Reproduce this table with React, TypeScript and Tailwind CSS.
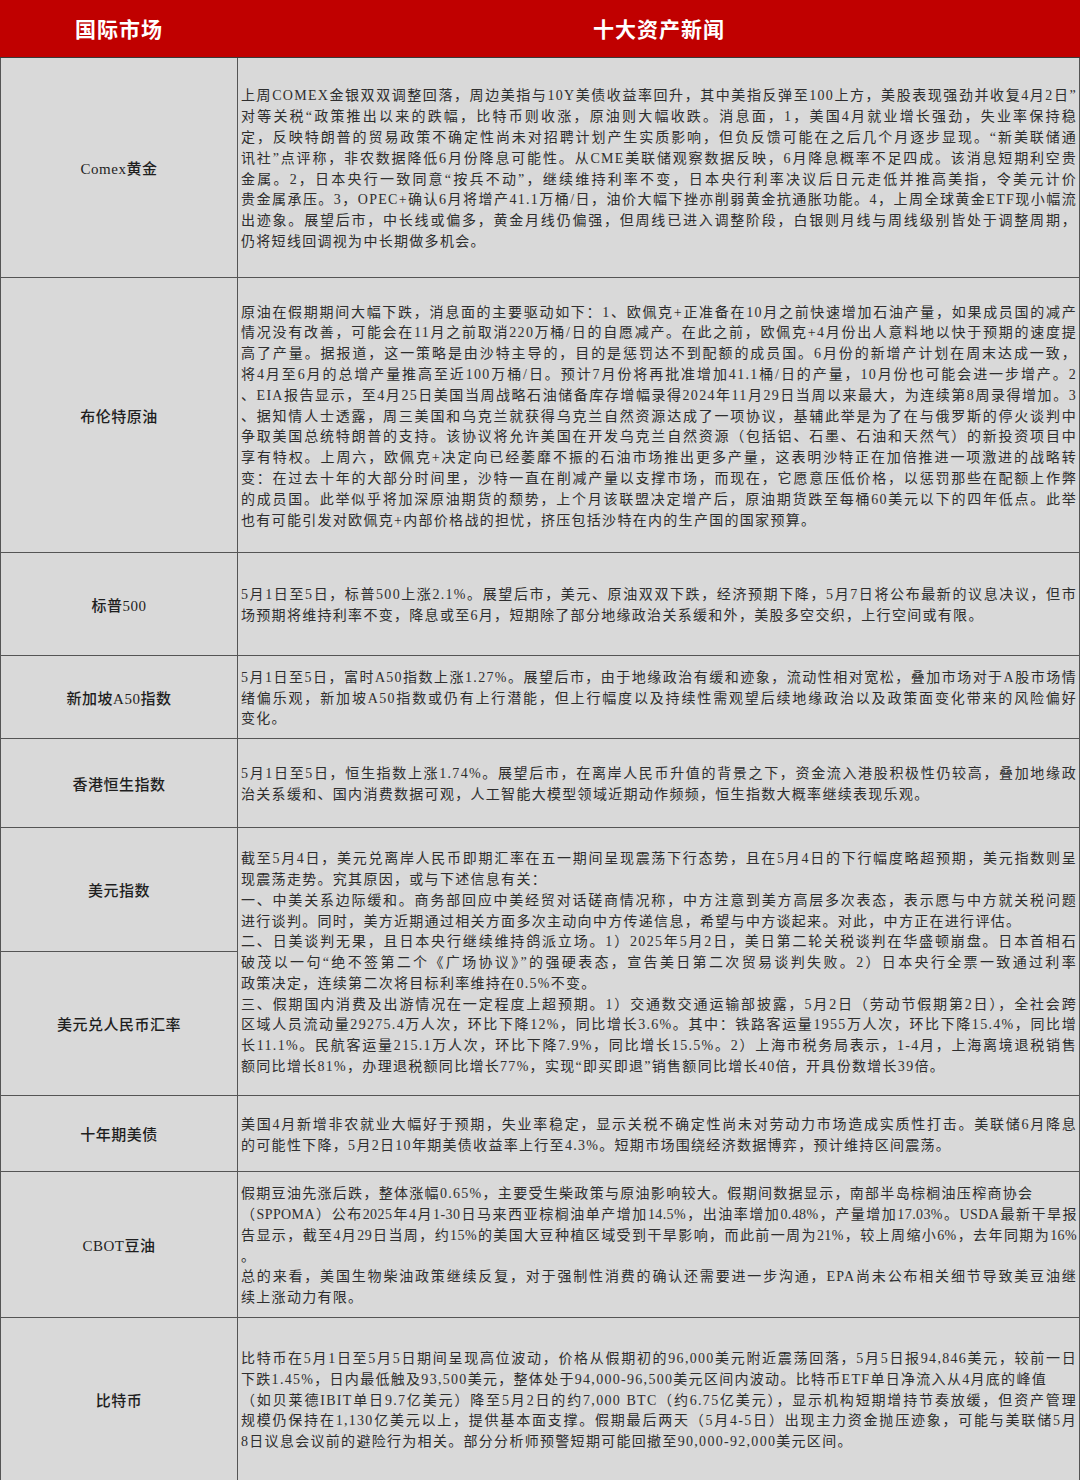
import React from "react";

interface Row {
  label: string;
  h: string;
  lines: string[];
  open?: number[];
  tight?: number[];
}

const rows1: Row[] = [
  {
    label: "Comex黄金",
    h: "h-[220px]",
    lines: [
      "上周COMEX金银双双调整回落，周边美指与10Y美债收益率回升，其中美指反弹至100上方，美股表现强劲并收复4月2日”",
      "对等关税“政策推出以来的跌幅，比特币则收涨，原油则大幅收跌。消息面，1，美国4月就业增长强劲，失业率保持稳",
      "定，反映特朗普的贸易政策不确定性尚未对招聘计划产生实质影响，但负反馈可能在之后几个月逐步显现。“新美联储通",
      "讯社”点评称，非农数据降低6月份降息可能性。从CME美联储观察数据反映，6月降息概率不足四成。该消息短期利空贵",
      "金属。2，日本央行一致同意“按兵不动”，继续维持利率不变，日本央行利率决议后日元走低并推高美指，令美元计价",
      "贵金属承压。3，OPEC+确认6月将增产41.1万桶/日，油价大幅下挫亦削弱黄金抗通胀功能。4，上周全球黄金ETF现小幅流",
      "出迹象。展望后市，中长线或偏多，黄金月线仍偏强，但周线已进入调整阶段，白银则月线与周线级别皆处于调整周期，",
      "仍将短线回调视为中长期做多机会。",
    ],
  },
  {
    label: "布伦特原油",
    h: "h-[275px]",
    lines: [
      "原油在假期期间大幅下跌，消息面的主要驱动如下：1、欧佩克+正准备在10月之前快速增加石油产量，如果成员国的减产",
      "情况没有改善，可能会在11月之前取消220万桶/日的自愿减产。在此之前，欧佩克+4月份出人意料地以快于预期的速度提",
      "高了产量。据报道，这一策略是由沙特主导的，目的是惩罚达不到配额的成员国。6月份的新增产计划在周末达成一致，",
      "将4月至6月的总增产量推高至近100万桶/日。预计7月份将再批准增加41.1桶/日的产量，10月份也可能会进一步增产。2",
      "、EIA报告显示，至4月25日美国当周战略石油储备库存增幅录得2024年11月29日当周以来最大，为连续第8周录得增加。3",
      "、据知情人士透露，周三美国和乌克兰就获得乌克兰自然资源达成了一项协议，基辅此举是为了在与俄罗斯的停火谈判中",
      "争取美国总统特朗普的支持。该协议将允许美国在开发乌克兰自然资源（包括铝、石墨、石油和天然气）的新投资项目中",
      "享有特权。上周六，欧佩克+决定向已经萎靡不振的石油市场推出更多产量，这表明沙特正在加倍推进一项激进的战略转",
      "变：在过去十年的大部分时间里，沙特一直在削减产量以支撑市场，而现在，它愿意压低价格，以惩罚那些在配额上作弊",
      "的成员国。此举似乎将加深原油期货的颓势，上个月该联盟决定增产后，原油期货跌至每桶60美元以下的四年低点。此举",
      "也有可能引发对欧佩克+内部价格战的担忧，挤压包括沙特在内的生产国的国家预算。",
    ],
  },
  {
    label: "标普500",
    h: "h-[103px]",
    lines: [
      "5月1日至5日，标普500上涨2.1%。展望后市，美元、原油双双下跌，经济预期下降，5月7日将公布最新的议息决议，但市",
      "场预期将维持利率不变，降息或至6月，短期除了部分地缘政治关系缓和外，美股多空交织，上行空间或有限。",
    ],
  },
  {
    label: "新加坡A50指数",
    h: "h-[83px]",
    lines: [
      "5月1日至5日，富时A50指数上涨1.27%。展望后市，由于地缘政治有缓和迹象，流动性相对宽松，叠加市场对于A股市场情",
      "绪偏乐观，新加坡A50指数或仍有上行潜能，但上行幅度以及持续性需观望后续地缘政治以及政策面变化带来的风险偏好",
      "变化。",
    ],
  },
  {
    label: "香港恒生指数",
    h: "h-[89px]",
    lines: [
      "5月1日至5日，恒生指数上涨1.74%。展望后市，在离岸人民币升值的背景之下，资金流入港股积极性仍较高，叠加地缘政",
      "治关系缓和、国内消费数据可观，人工智能大模型领域近期动作频频，恒生指数大概率继续表现乐观。",
    ],
  },
];

const usdLines = [
  "截至5月4日，美元兑离岸人民币即期汇率在五一期间呈现震荡下行态势，且在5月4日的下行幅度略超预期，美元指数则呈",
  "现震荡走势。究其原因，或与下述信息有关：",
  "一、中美关系边际缓和。商务部回应中美经贸对话磋商情况称，中方注意到美方高层多次表态，表示愿与中方就关税问题",
  "进行谈判。同时，美方近期通过相关方面多次主动向中方传递信息，希望与中方谈起来。对此，中方正在进行评估。",
  "二、日美谈判无果，且日本央行继续维持鸽派立场。1）2025年5月2日，美日第二轮关税谈判在华盛顿崩盘。日本首相石",
  "破茂以一句“绝不签第二个《广场协议》”的强硬表态，宣告美日第二次贸易谈判失败。2）日本央行全票一致通过利率",
  "政策决定，连续第二次将目标利率维持在0.5%不变。",
  "三、假期国内消费及出游情况在一定程度上超预期。1）交通数交通运输部披露，5月2日（劳动节假期第2日），全社会跨",
  "区域人员流动量29275.4万人次，环比下降12%，同比增长3.6%。其中：铁路客运量1955万人次，环比下降15.4%，同比增",
  "长11.1%。民航客运量215.1万人次，环比下降7.9%，同比增长15.5%。2）上海市税务局表示，1-4月，上海离境退税销售",
  "额同比增长81%，办理退税额同比增长77%，实现“即买即退”销售额同比增长40倍，开具份数增长39倍。",
];

const rows2: Row[] = [
  {
    label: "十年期美债",
    h: "h-[76px]",
    lines: [
      "美国4月新增非农就业大幅好于预期，失业率稳定，显示关税不确定性尚未对劳动力市场造成实质性打击。美联储6月降息",
      "的可能性下降，5月2日10年期美债收益率上行至4.3%。短期市场围绕经济数据博弈，预计维持区间震荡。",
    ],
  },
  {
    label: "CBOT豆油",
    h: "h-[146px]",
    lines: [
      "假期豆油先涨后跌，整体涨幅0.65%，主要受生柴政策与原油影响较大。假期间数据显示，南部半岛棕榈油压榨商协会",
      "（SPPOMA）公布2025年4月1-30日马来西亚棕榈油单产增加14.5%，出油率增加0.48%，产量增加17.03%。USDA最新干旱报",
      "告显示，截至4月29日当周，约15%的美国大豆种植区域受到干旱影响，而此前一周为21%，较上周缩小6%，去年同期为16%",
      "。",
      "总的来看，美国生物柴油政策继续反复，对于强制性消费的确认还需要进一步沟通，EPA尚未公布相关细节导致美豆油继",
      "续上涨动力有限。",
    ],
    open: [0, 3],
    tight: [1, 2],
  },
  {
    label: "比特币",
    h: "h-[162px]",
    lines: [
      "比特币在5月1日至5月5日期间呈现高位波动，价格从假期初的96,000美元附近震荡回落，5月5日报94,846美元，较前一日",
      "下跌1.45%，日内最低触及93,500美元，整体处于94,000-96,500美元区间内波动。比特币ETF单日净流入从4月底的峰值",
      "（如贝莱德IBIT单日9.7亿美元）降至5月2日的约7,000 BTC（约6.75亿美元），显示机构短期增持节奏放缓，但资产管理",
      "规模仍保持在1,130亿美元以上，提供基本面支撑。假期最后两天（5月4-5日）出现主力资金抛压迹象，可能与美联储5月",
      "8日议息会议前的避险行为相关。部分分析师预警短期可能回撤至90,000-92,000美元区间。",
    ],
    open: [1],
  },
];

function Lines({
  lines,
  open = [],
  tight = [],
}: {
  lines: string[];
  open?: number[];
  tight?: number[];
}) {
  return (
    <div className="flex-1 min-w-0 flex flex-col justify-center pt-1 pl-[3px] pr-[2px] overflow-hidden">
      {lines.map((line, i) => {
        const last = i === lines.length - 1 || open.includes(i);
        return (
          <div
            key={i}
            className={`whitespace-nowrap leading-[20.8px] ${
              last ? "text-left" : "text-justify [text-align-last:justify]"
            } ${tight.includes(i) ? "tracking-[0.4px]" : ""}`}
          >
            {line}
          </div>
        );
      })}
    </div>
  );
}

function Label({ text }: { text: string }) {
  return (
    <div className="w-[237px] shrink-0 border-r border-[#555] flex items-center justify-center pt-1 text-[15px] font-medium tracking-[0.5px] text-[#1f1f1f]">
      {text}
    </div>
  );
}

function TableRow({ row, last }: { row: Row; last?: boolean }) {
  return (
    <div className={`flex ${row.h} ${last ? "" : "border-b border-[#555]"}`}>
      <Label text={row.label} />
      <Lines lines={row.lines} open={row.open} tight={row.tight} />
    </div>
  );
}

export default function App() {
  return (
    <div
      className="w-[1080px] h-[1480px] overflow-hidden bg-[#d9d9d9] text-[14px] tracking-[1.3px] text-[#2e2e2e]"
      style={{ fontFamily: "'Liberation Serif', 'Noto Sans CJK SC', serif" }}
    >
      <div
        className="flex h-[58px] bg-[#c00000] border-b border-[#3a3a3a] text-white text-[21px] font-semibold tracking-[1px]"
        style={{ fontFamily: "'Noto Sans CJK SC', sans-serif" }}
      >
        <div className="w-[238px] flex items-center justify-center">国际市场</div>
        <div className="flex-1 flex items-center justify-center">十大资产新闻</div>
      </div>
      <div className="border-l border-r border-[#555]">
        {rows1.map((r) => (
          <TableRow key={r.label} row={r} />
        ))}

        <div className="flex h-[268px] border-b border-[#555]">
          <div className="w-[237px] shrink-0 border-r border-[#555] flex flex-col text-[15px] font-medium tracking-[0.5px] text-[#1f1f1f]">
            <div className="h-[124px] border-b border-[#555] flex items-center justify-center pt-1">美元指数</div>
            <div className="flex-1 flex items-center justify-center pt-1">美元兑人民币汇率</div>
          </div>
          <Lines lines={usdLines} open={[1, 3, 6]} />
        </div>

        {rows2.map((r, i) => (
          <TableRow key={r.label} row={r} last={i === rows2.length - 1} />
        ))}
      </div>
    </div>
  );
}
